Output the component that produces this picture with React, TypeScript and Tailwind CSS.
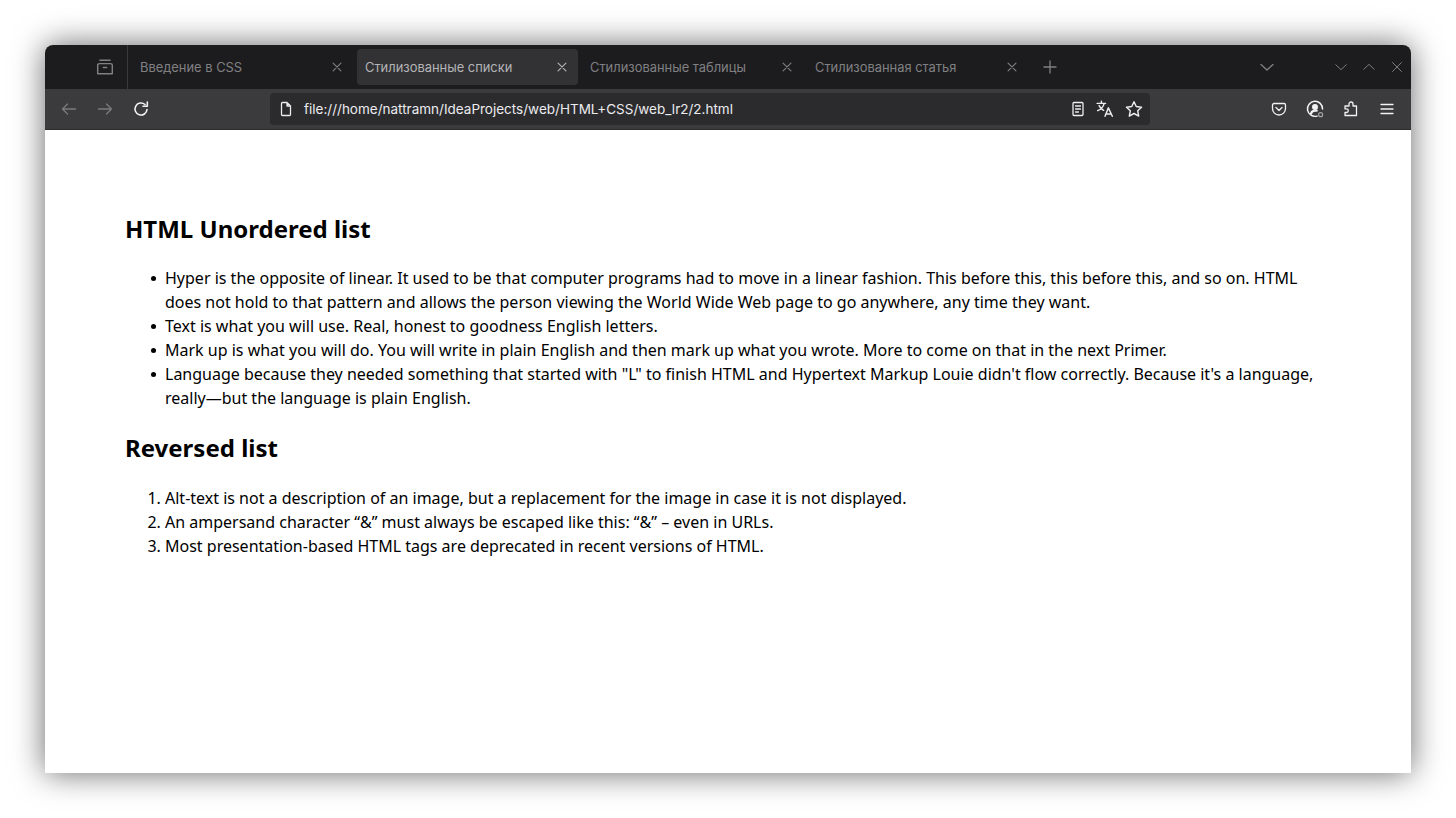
import type { ReactNode } from 'react'

const TABS = [
  { title: 'Введение в CSS', active: false },
  { title: 'Стилизованные списки', active: true },
  { title: 'Стилизованные таблицы', active: false },
  { title: 'Стилизованная статья', active: false },
]

const BULLET =
  "relative before:absolute before:top-[10px] before:left-[-14px] before:h-[5px] before:w-[5px] before:rounded-full before:bg-black before:content-['']"

function Icon({ children, className }: { children: ReactNode; className: string }) {
  return (
    <svg
      viewBox="0 0 16 16"
      fill="none"
      stroke="currentColor"
      strokeWidth="1.3"
      strokeLinecap="round"
      strokeLinejoin="round"
      className={className}
    >
      {children}
    </svg>
  )
}

function CloseIcon({ className }: { className: string }) {
  return (
    <Icon className={className}>
      <path d="M3.5 3.5l9 9M12.5 3.5l-9 9" />
    </Icon>
  )
}

function Tab({ title, active }: { title: string; active: boolean }) {
  return (
    <div
      className={`flex h-9 w-[221px] shrink-0 items-center justify-between rounded pl-2 pr-[9px] text-[12.9px] ${
        active ? 'bg-[#323235] text-[#b4b4b6]' : 'text-[#808083]'
      }`}
    >
      <span className="pt-0.5">{title}</span>
      <CloseIcon className="h-[14px] w-[14px]" />
    </div>
  )
}

function TabBar() {
  return (
    <div className="flex h-11 shrink-0 items-center bg-[#1c1c1e] text-[#808083]">
      <div className="flex h-full w-[83px] shrink-0 items-center justify-end border-r border-[#3a3a3c] pr-[13px]">
        <Icon className="h-[18px] w-[18px]">
          <path d="M3.5 2h9M1.5 6.5A1.5 1.5 0 0 1 3 5h10a1.5 1.5 0 0 1 1.5 1.5V14H1.5zM6.5 8.5h3" />
        </Icon>
      </div>
      <div className="ml-1 flex items-center gap-1">
        {TABS.map((tab) => (
          <Tab key={tab.title} title={tab.title} active={tab.active} />
        ))}
      </div>
      <Icon className="ml-[14px] h-4 w-4">
        <path d="M8 2v12M2 8h12" />
      </Icon>
      <Icon className="ml-[201px] h-4 w-4">
        <path d="M2 5.5l6 5.5 6-5.5" />
      </Icon>
      <div className="ml-[60px] flex items-center gap-4">
        <Icon className="h-3 w-3">
          <path d="M1 5l7 6.5L15 5" />
        </Icon>
        <Icon className="h-3 w-3">
          <path d="M1 11l7-6.5 7 6.5" />
        </Icon>
        <Icon className="h-3 w-3">
          <path d="M2 2l12 12M14 2L2 14" />
        </Icon>
      </div>
    </div>
  )
}

function UrlBar() {
  return (
    <div className="ml-[121px] flex h-8 w-[880px] shrink-0 items-center rounded bg-[#2b2b2e] pl-2 text-[#ececee]">
      <Icon className="h-4 w-4">
        <path d="M3.5 2.5a1 1 0 0 1 1-1H9L12.5 5v8.5a1 1 0 0 1-1 1h-7a1 1 0 0 1-1-1zM9 1.5V5h3.5" />
      </Icon>
      <span className="ml-[10px] text-[13.5px]">file:///home/nattramn/IdeaProjects/web/HTML+CSS/web_lr2/2.html</span>
      <div className="ml-auto mr-[7px] flex items-center gap-[11px]">
        <Icon className="-mr-px h-4 w-4">
          <path d="M3 2.5a1 1 0 0 1 1-1h8a1 1 0 0 1 1 1v11a1 1 0 0 1-1 1H4a1 1 0 0 1-1-1zM5.5 5h5M5.5 8h5M5.5 11h3" />
        </Icon>
        <Icon className="h-[18px] w-[18px]">
          <path d="M1 3h7.5M4.8 1.2V3M7.3 3C6.5 6 4 8.500 1.500 9.500M2.800 5c.8 2 2.600 3.500 4 4.200M8 14.500l3-7.500 3.500 7.500M9 12.500h4.600" />
        </Icon>
        <Icon className="h-[18px] w-[18px]">
          <path d="M8 1.500l2 4.300 4.700.6-3.400 3.200.9 4.700L8 12l-4.200 2.300.9-4.700L1.300 6.400 6 5.800z" />
        </Icon>
      </div>
    </div>
  )
}

function Toolbar() {
  return (
    <div className="flex h-[41px] shrink-0 items-center border-b border-[#2e2e30] bg-[#3b3b3d] pl-4 text-[#f2f2f4]">
      <div className="flex w-[88px] shrink-0 items-center justify-between">
        <Icon className="h-4 w-4 text-[#7b7b7e]">
          <path d="M14.500 8h-13M6.500 3l-5 5 5 5" />
        </Icon>
        <Icon className="h-4 w-4 text-[#7b7b7e]">
          <path d="M1.500 8h13M9.500 3l5 5-5 5" />
        </Icon>
        <svg
          viewBox="0 0 16 16"
          fill="none"
          stroke="currentColor"
          strokeWidth="1.6"
          strokeLinecap="round"
          strokeLinejoin="round"
          className="h-4 w-4"
        >
          <path d="M14 8.500A6 6 0 1 1 12 3.500M14.300 1v4.300H10" />
        </svg>
      </div>
      <UrlBar />
      <div className="ml-[121px] flex items-center gap-5">
        <Icon className="h-4 w-4">
          <path d="M1.500 4a1.500 1.500 0 0 1 1.500-1.500h10A1.500 1.500 0 0 1 14.500 4v3.500a6.500 6.500 0 0 1-13 0zM5 6.500L8 9.500l3-3" />
        </Icon>
        <Icon className="-mx-px h-[18px] w-[18px]">
          <path d="M9.800 14.300A6.700 6.700 0 1 1 14.700 8" />
          <circle cx="8" cy="6.300" r="2" fill="currentColor" />
          <path d="M4.500 12c.5-1.800 1.800-2.500 3.500-2.500h1.500" strokeWidth="2" />
          <circle cx="13" cy="13" r="1.800" strokeWidth="1" className="text-[#a5a5a8]" />
        </Icon>
        <Icon className="h-4 w-4">
          <path d="M6 5V3a2 2 0 0 1 4 0v2h3.500v9.500H2v-3h1.500a1.800 1.800 0 0 0 0-3.600H2V5z" />
        </Icon>
        <Icon className="h-4 w-4">
          <path d="M2 3.500h12M2 8h12M2 12.500h12" />
        </Icon>
      </div>
    </div>
  )
}

function PageContent() {
  return (
    <main className="flex-1 bg-white px-20 pt-[82px] font-['Noto_Sans',sans-serif] text-base leading-6 text-black">
      <h2 className="mb-[21px] text-2xl leading-[33px] font-bold">HTML Unordered list</h2>
      <ul className="list-none pl-10">
        <li className={BULLET}>
          Hyper is the opposite of linear. It used to be that computer programs had to move in a linear fashion. This
          before this, this before this, and so on. HTML does not hold to that pattern and allows the person viewing the
          World Wide Web page to go anywhere, any time they want.
        </li>
        <li className={BULLET}>Text is what you will use. Real, honest to goodness English letters.</li>
        <li className={BULLET}>
          Mark up is what you will do. You will write in plain English and then mark up what you wrote. More to come on
          that in the next Primer.
        </li>
        <li className={BULLET}>
          Language because they needed something that started with "L" to finish HTML and Hypertext Markup Louie didn't
          flow correctly. Because it's a language, really—but the language is plain English.
        </li>
      </ul>
      <h2 className="mt-[21px] mb-[22px] text-2xl leading-[33px] font-bold">Reversed list</h2>
      <ol className="list-decimal pl-10">
        <li>Alt-text is not a description of an image, but a replacement for the image in case it is not displayed.</li>
        <li>An ampersand character “&amp;” must always be escaped like this: “&amp;” – even in URLs.</li>
        <li>Most presentation-based HTML tags are deprecated in recent versions of HTML.</li>
      </ol>
    </main>
  )
}

export default function App() {
  return (
    <div className="h-[818px] overflow-hidden bg-white pt-[45px] pl-[45px]">
      <div className="flex h-[728px] w-[1366px] flex-col overflow-hidden rounded-t-lg font-['Inter',sans-serif] shadow-[0_0_32px_rgba(0,0,0,0.6)]">
        <TabBar />
        <Toolbar />
        <PageContent />
      </div>
    </div>
  )
}
